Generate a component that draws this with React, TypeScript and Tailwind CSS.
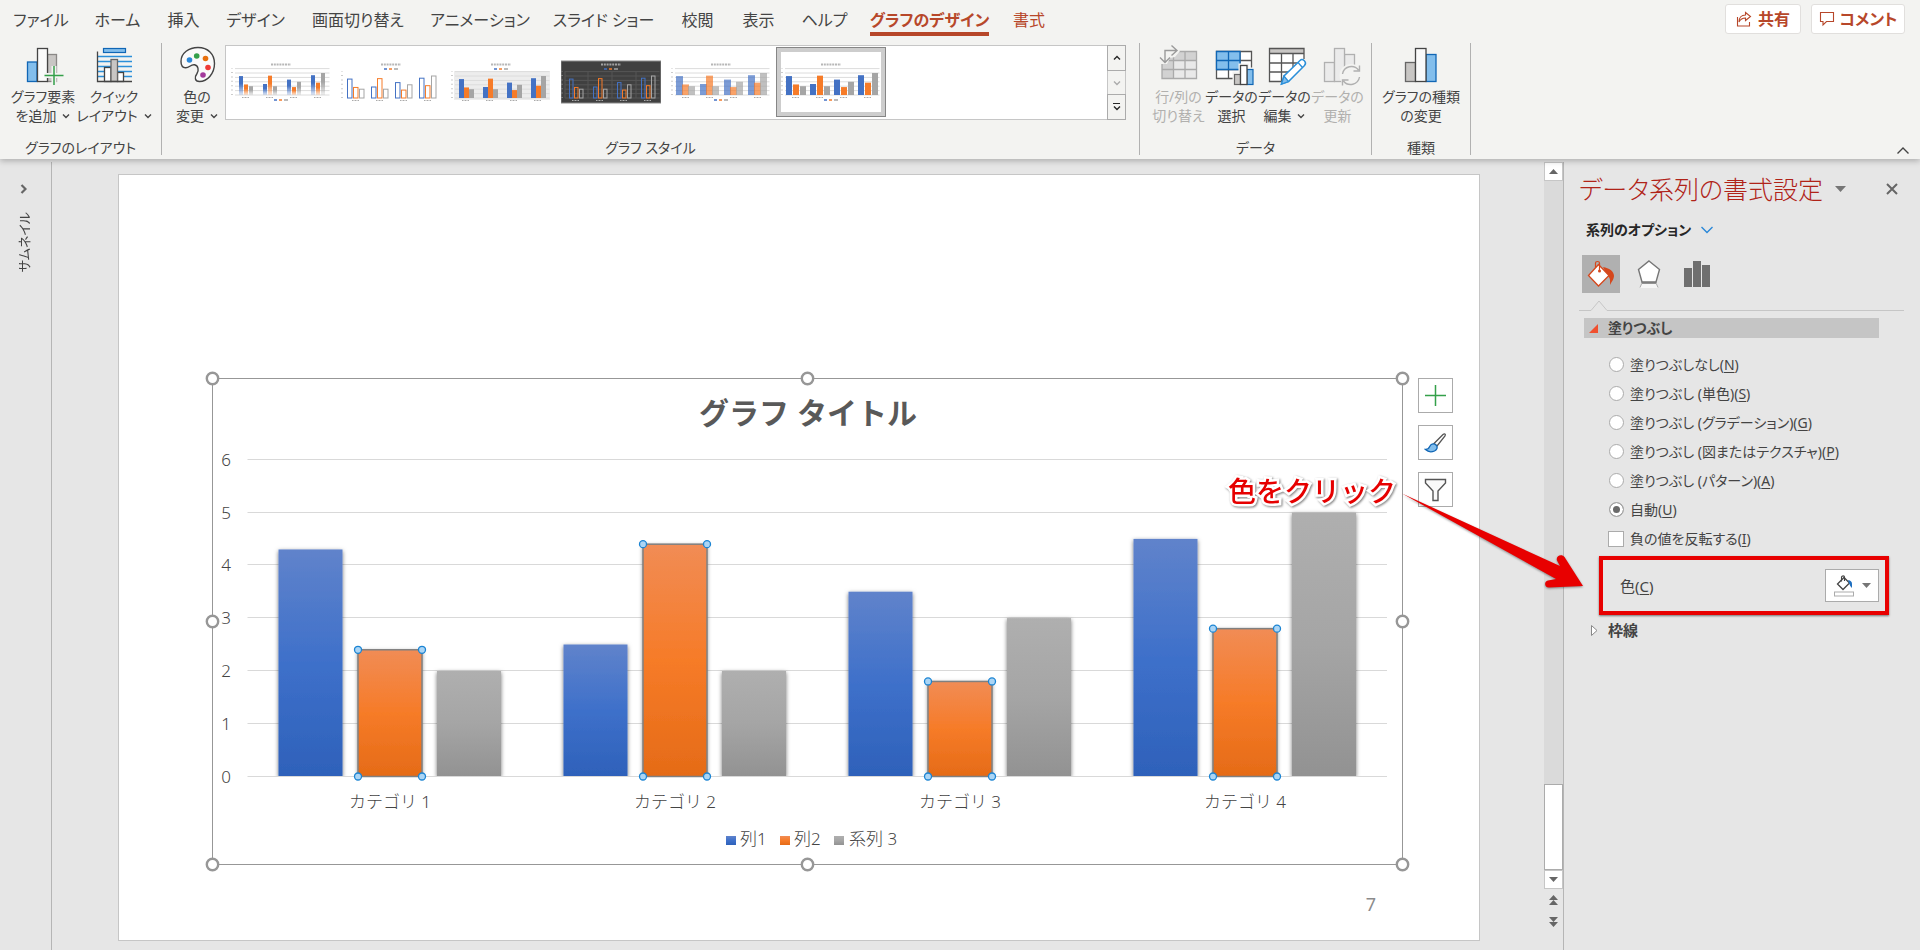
import React from 'react'

const tabs = [
  { label: 'ファイル', cell: 'w-[78px]' },
  { label: 'ホーム', cell: 'w-[75px]' },
  { label: '挿入', cell: 'w-[57px]' },
  { label: 'デザイン', cell: 'w-[87px]' },
  { label: '画面切り替え', cell: 'w-[118px]' },
  { label: 'アニメーション', cell: 'w-[126px]' },
  { label: 'スライド ショー', cell: 'w-[121px]' },
  { label: '校閲', cell: 'w-[67px]' },
  { label: '表示', cell: 'w-[55px]' },
  { label: 'ヘルプ', cell: 'w-[77px]' },
  { label: 'グラフのデザイン', cell: 'w-[133px]', active: true },
  { label: '書式', cell: 'w-[66px]', context: true },
]

const categories = [
  { name: 'カテゴリ 1', values: [4.3, 2.4, 2] },
  { name: 'カテゴリ 2', values: [2.5, 4.4, 2] },
  { name: 'カテゴリ 3', values: [3.5, 1.8, 3] },
  { name: 'カテゴリ 4', values: [4.5, 2.8, 5] },
]

const fillOptions = [
  { label: '塗りつぶしなし', keyName: 'N' },
  { label: '塗りつぶし (単色)', keyName: 'S' },
  { label: '塗りつぶし (グラデーション)', keyName: 'G' },
  { label: '塗りつぶし (図またはテクスチャ)', keyName: 'P' },
  { label: '塗りつぶし (パターン)', keyName: 'A' },
  { label: '自動', keyName: 'U' },
]

/* ---------- Ribbon icons ---------- */

function RibbonIcon({ children }: { children: React.ReactNode }) {
  return (
    <svg viewBox="0 0 40 40" className="w-10 h-10 overflow-visible" fill="none" aria-hidden="true">
      {children}
    </svg>
  )
}

function AddElementIcon() {
  return (
    <RibbonIcon>
      <rect x="24.5" y="9.5" width="9" height="27" fill="#c8c6c4" stroke="#8a8886" strokeWidth="1.3" />
      <rect x="4.5" y="17" width="9.5" height="19.5" fill="#83beec" stroke="#1066b5" strokeWidth="1.3" />
      <rect x="14.5" y="3.5" width="10" height="33" fill="#fafafa" stroke="#444" strokeWidth="1.3" />
      <path d="M31 21v19M21.5 30.5h19" stroke="#f3f3f1" strokeWidth="5" />
      <path d="M31 21v19M21.5 30.5h19" stroke="#34a04a" strokeWidth="1.5" />
    </RibbonIcon>
  )
}

function QuickLayoutIcon() {
  return (
    <RibbonIcon>
      <rect x="9.5" y="3.5" width="22" height="4" fill="#83beec" stroke="#1066b5" strokeWidth="1.2" />
      <path d="M4 11.5h34M4 16.5h34M4 21.5h34M4 26.5h34M4 31.5h34" stroke="#2b8fd9" strokeWidth="1.5" />
      <rect x="10.5" y="22.5" width="6.5" height="14" fill="#fff" stroke="#444" strokeWidth="1.3" />
      <rect x="23.5" y="27.5" width="6" height="9" fill="#fff" stroke="#444" strokeWidth="1.3" />
      <rect x="17" y="14.5" width="6.5" height="22" fill="#c8c6c4" stroke="#666" strokeWidth="1.3" />
      <path d="M3.5 6.5v30h34.5" stroke="#444" strokeWidth="1.3" />
    </RibbonIcon>
  )
}

function PaletteIcon() {
  return (
    <RibbonIcon>
      <path
        d="M4 16.5C4 8 12 2.5 21 2.5C31 2.5 37.5 9 37.5 18.5C37.5 29 30 36.5 22.5 36.5C17.5 36.5 17.5 32 20 28.5C22 25.5 21.5 20.5 17.5 19.8C13.5 19.2 12.5 23 8.5 22.8C5 22.6 4 19.5 4 16.5Z"
        fill="#fafafa"
        stroke="#444"
        strokeWidth="1.4"
      />
      <circle cx="12.5" cy="15" r="2.8" fill="#2b88d8" />
      <circle cx="19.7" cy="11" r="2.8" fill="#34a04a" />
      <circle cx="28.5" cy="13.5" r="2.8" fill="#e8700f" />
      <circle cx="31" cy="22.5" r="2.8" fill="#ee3a36" />
      <circle cx="26" cy="30" r="2.8" fill="#a33a9c" />
    </RibbonIcon>
  )
}

function SwitchRowColumnIcon() {
  return (
    <RibbonIcon>
      <rect x="3" y="6.5" width="34.5" height="27" fill="#e9e9e9" />
      <path d="M3 6.5h34.5v9H14.5v18H3z" fill="#d2d2d2" />
      <path d="M3 6.5h34.5v27H3zM14.5 6.5v27M26 6.5v27M3 15.5h34.5M3 24.5h34.5" stroke="#aaa" strokeWidth="1.3" />
      <path d="M0 1h16l5 5-5 6-5 1-3 6H0z" fill="#f3f3f1" />
      <path d="M6 17.5V5.5H17.5M1 12.5l5 5 5-5M12.5 0.5l5.5 5-5.5 5" stroke="#9a9a9a" strokeWidth="1.4" />
    </RibbonIcon>
  )
}

function SelectDataIcon() {
  return (
    <RibbonIcon>
      <rect x="4.5" y="6.5" width="35" height="27" fill="#fff" />
      <path d="M4.5 6.5h35v27h-35zM16.5 6.5v27M28 6.5v27M4.5 15.5h35M4.5 24.5h35" stroke="#555" strokeWidth="1.3" />
      <path d="M4.5 6.5H28v18H4.5z" fill="#83beec" stroke="#1066b5" strokeWidth="1.3" />
      <path d="M16.5 6.5v18M4.5 15.5H28" stroke="#1066b5" strokeWidth="1.3" />
      <path d="M20.5 41V26.5h6V18.5h10.5v4h6V41z" fill="#f3f3f1" />
      <rect x="22.5" y="29.5" width="6" height="10" fill="#c8c6c4" stroke="#666" strokeWidth="1.2" />
      <rect x="35" y="24.5" width="6" height="15" fill="#83beec" stroke="#1066b5" strokeWidth="1.2" />
      <rect x="28.5" y="20.5" width="6.5" height="19" fill="#fff" stroke="#444" strokeWidth="1.3" />
    </RibbonIcon>
  )
}

function EditDataIcon() {
  return (
    <RibbonIcon>
      <rect x="4.5" y="3.5" width="34.5" height="33" fill="#fff" />
      <rect x="4.5" y="3.5" width="34.5" height="5" fill="#c8c6c4" />
      <path d="M4.5 3.5H39v33H4.5zM4.5 8.5H39M16.5 8.5v28M28 8.5v28M4.5 18H39M4.5 27H39" stroke="#555" strokeWidth="1.3" />
      <path d="M17 39l2-8L36 14l6 0v24H17z" fill="#f3f3f1" />
      <path d="M16.5 39l2.5-8L35 15.5c2.5-2.5 7.5 1.5 4.5 5L23.5 36.5z" fill="#fff" stroke="#2b8fd9" strokeWidth="1.5" />
      <path d="M16.5 39l2.5-8 4.5 5.5z" fill="#83beec" stroke="#2b8fd9" strokeWidth="1.3" />
      <path d="M33 17.5l4.5 5" stroke="#2b8fd9" strokeWidth="1.3" />
    </RibbonIcon>
  )
}

function RefreshDataIcon() {
  return (
    <RibbonIcon>
      <g fill="#ebebeb" stroke="#b0b0b0" strokeWidth="1.3">
        <rect x="6.5" y="17.5" width="10" height="19" />
        <rect x="26.5" y="9.5" width="10" height="27" />
        <rect x="16.5" y="3.5" width="10" height="33" />
      </g>
      <circle cx="33" cy="30.5" r="11.5" fill="#f3f3f1" />
      <path d="M24.5 29a9 9 0 0 1 16-4M41.5 32a9 9 0 0 1-16 4M41.5 20.5v5.5h-6M24.5 40.5V35h6" stroke="#b0b0b0" strokeWidth="1.4" />
    </RibbonIcon>
  )
}

function ChangeTypeIcon() {
  return (
    <RibbonIcon>
      <rect x="4.5" y="17.5" width="10" height="19" fill="#c8c6c4" stroke="#666" strokeWidth="1.3" />
      <rect x="25" y="9.5" width="10" height="27" fill="#83beec" stroke="#1066b5" strokeWidth="1.3" />
      <rect x="14.5" y="3.5" width="10.5" height="33" fill="#fafafa" stroke="#444" strokeWidth="1.3" />
    </RibbonIcon>
  )
}

function Chevron({ className = '' }: { className?: string }) {
  return (
    <svg viewBox="0 0 8 8" className={`inline-block w-2 h-2 ${className}`} fill="none" aria-hidden="true">
      <path d="M1 2.5l3 3 3-3" stroke="currentColor" strokeWidth="1.4" />
    </svg>
  )
}

/* ---------- Ribbon ---------- */

type RibbonButtonProps = {
  icon: React.ReactNode
  lines: [string, string]
  width: string
  menu?: boolean
  disabled?: boolean
}

function RibbonButton({ icon, lines, width, menu, disabled }: RibbonButtonProps) {
  return (
    <button
      disabled={disabled}
      className={`${width} shrink-0 flex flex-col items-center gap-[2px] pt-[2px] text-[14px] leading-[19px] whitespace-nowrap ${disabled ? 'text-[#b1b0ae]' : 'text-[#444]'}`}
    >
      {icon}
      <span className="flex flex-col items-center">
        <span>{lines[0]}</span>
        <span className="flex items-center gap-[6px]">
          {lines[1]}
          {menu && <Chevron />}
        </span>
      </span>
    </button>
  )
}

type RibbonGroupProps = {
  label: string
  width: string
  pad: string
  children: React.ReactNode
}

function RibbonGroup({ label, width, pad, children }: RibbonGroupProps) {
  return (
    <section className={`${width} flex flex-col justify-between border-r border-[#b1b1b1] h-[112px]`}>
      <div className={`flex ${pad}`}>{children}</div>
      <div className="text-center text-[14px] leading-[14px] text-[#444]">{label}</div>
    </section>
  )
}

type ThumbKind = 'faded' | 'outline' | 'band' | 'dark' | 'soft' | 'solid'

const thumbShapes: Record<ThumbKind, { first: number; step: number; bar: number; base: number }> = {
  faded: { first: 8, step: 5, bar: 4, base: 43 },
  outline: { first: 6, step: 6, bar: 5, base: 46 },
  band: { first: 8, step: 5, bar: 5, base: 46 },
  dark: { first: 8, step: 5, bar: 4, base: 46 },
  soft: { first: 5, step: 6, bar: 7, base: 43 },
  solid: { first: 5, step: 7, bar: 6, base: 43 },
}

function StyleThumb({ kind }: { kind: ThumbKind }) {
  const { first, step, bar, base } = thumbShapes[kind]
  const colors = ['#4472c4', '#f67b28', '#a5a5a5']
  const hollow = kind === 'outline' || kind === 'dark'
  const grid = kind === 'dark' ? '#555' : '#dcdcdc'
  const legendY = base === 46 ? 17 : 48
  return (
    <svg viewBox="0 0 100 60" className="w-[100px] h-[60px] bg-white" aria-hidden="true">
      <defs>
        {colors.map((c, s) => (
          <linearGradient key={c} id={`fade-${s}`} x1="0" y1="0" x2="0" y2="1">
            <stop offset="0.4" stopColor={c} />
            <stop offset="1" stopColor={c} stopOpacity="0.15" />
          </linearGradient>
        ))}
      </defs>
      {kind === 'dark' && <rect x="0" y="9" width="100" height="42" fill="#404040" stroke="#8a8a8a" />}
      {kind === 'band' && <rect x="3" y="19" width="96" height="29" fill="#ededed" />}
      {kind !== 'outline' &&
        [0, 1, 2, 3, 4, 5, 6].map((n) => (
          <path key={n} d={`M4 ${base - n * 4.4}H98.5`} stroke={grid} strokeWidth="1" />
        ))}
      {kind === 'dark' && <path d="M4 19v27M27 19v27M51 19v27M75 19v27" stroke={grid} />}
      <path d={`M1 ${base}v-27`} stroke={kind === 'dark' ? '#999' : '#aaa'} strokeDasharray="1 3.4" strokeWidth="1.2" />
      <path d="M40 12.5h20" stroke={kind === 'dark' ? '#ccc' : '#999'} strokeWidth="2" strokeDasharray="2 0.8" opacity="0.7" />
      {categories.map((cat, c) => (
        <g key={cat.name}>
          {cat.values.map((v, s) => {
            const x = first + c * 24 + s * step
            return (
              <rect
                key={s}
                x={hollow ? x + 0.5 : x}
                y={base - v * 4.4}
                width={hollow ? bar - 0.5 : bar}
                height={v * 4.4}
                fill={hollow ? 'none' : kind === 'faded' ? `url(#fade-${s})` : colors[s]}
                stroke={hollow ? colors[s] : 'none'}
                opacity={kind === 'soft' ? 0.7 : 1}
              />
            )
          })}
          <path d={`M${11 + c * 24} ${base + 2.5}h7`} stroke="#aaa" strokeWidth="1" strokeDasharray="1 0.5" />
        </g>
      ))}
      <path d={`M43 ${legendY}h3`} stroke="#4472c4" strokeWidth="1.5" />
      <path d={`M48 ${legendY}h3`} stroke="#f67b28" strokeWidth="1.5" />
      <path d={`M53 ${legendY}h4`} stroke="#a5a5a5" strokeWidth="1.5" />
    </svg>
  )
}

function StyleGallery() {
  const kinds: ThumbKind[] = ['faded', 'outline', 'band', 'dark', 'soft', 'solid']
  return (
    <div className="flex flex-1 mt-[2px] h-[75px]">
      <div className="flex-1 flex bg-white border border-[#c6c6c6] border-r-0 pt-[1px]">
        {kinds.map((kind, i) => (
          <button
            key={kind}
            aria-label={`スタイル ${i + 1}`}
            className={`w-[110px] h-[70px] shrink-0 border p-1 ${kind === 'solid' ? 'border-[#868686] bg-[#cdcdcd]' : 'border-transparent'}`}
          >
            <StyleThumb kind={kind} />
          </button>
        ))}
      </div>
      <div className="w-[19px] flex flex-col text-[#262626]">
        <button aria-label="前の行" className="flex-1 flex items-center justify-center border border-[#ababab]">
          <Chevron className="rotate-180" />
        </button>
        <button aria-label="次の行" disabled className="flex-1 flex items-center justify-center border-x border-[#c6c6c6] text-[#ababab]">
          <Chevron />
        </button>
        <button aria-label="その他" className="flex-1 flex flex-col items-center justify-center border border-[#ababab]">
          <span className="w-[7px] h-px bg-[#262626]" />
          <Chevron />
        </button>
      </div>
    </div>
  )
}

function Ribbon() {
  return (
    <header className="relative z-10 bg-[#f3f3f1] shadow-[0_2px_6px_rgba(0,0,0,0.25)]">
      <div className="flex justify-between h-[43px] pl-[2px] pr-[15px]">
        <nav className="flex h-9">
          {tabs.map((tab) => (
            <button
              key={tab.label}
              className={`${tab.cell} shrink-0 flex justify-center text-[16px] whitespace-nowrap ${tab.active ? 'font-bold text-[#b7472a]' : tab.context ? 'text-[#b7472a]' : 'text-[#444]'}`}
            >
              <span className={`h-9 pt-2 leading-6 ${tab.active ? 'border-b-4 border-[#b7472a]' : ''}`}>{tab.label}</span>
            </button>
          ))}
        </nav>
        <div className="flex gap-[10px] pt-1">
          <button className="w-[76px] h-[30px] flex items-center justify-center gap-[6px] rounded-[3px] bg-white border border-[#e1dfdd] text-[16px] leading-6 font-bold text-[#b7472a]">
            <svg viewBox="0 0 16 16" className="w-4 h-4" fill="none" stroke="currentColor" strokeWidth="1.1" aria-hidden="true">
              <path d="M1.5 6v9h12v-4M9.5 1.5l5 4-5 4v-2.5c-3 0-5 1-6.5 4 0-4.5 2.5-7 6.5-7z" />
            </svg>
            共有
          </button>
          <button className="w-[94px] h-[30px] flex items-center justify-center gap-[5px] rounded-[3px] bg-white border border-[#e1dfdd] text-[16px] leading-6 font-bold text-[#b7472a]">
            <svg viewBox="0 0 16 16" className="w-4 h-4" fill="none" stroke="currentColor" strokeWidth="1.1" aria-hidden="true">
              <path d="M1.5 1.5h13v9h-7l-3.5 3.5v-3.5h-2.5z" />
            </svg>
            コメント
          </button>
        </div>
      </div>
      <div className="flex h-[116px]">
        <RibbonGroup label="グラフのレイアウト" width="w-[162px]" pad="pl-2">
          <RibbonButton icon={<AddElementIcon />} lines={['グラフ要素', 'を追加']} width="w-[70px]" menu />
          <RibbonButton icon={<QuickLayoutIcon />} lines={['クイック', 'レイアウト']} width="w-[72px]" menu />
        </RibbonGroup>
        <RibbonGroup label="グラフ スタイル" width="flex-1 max-w-[978px]" pad="pl-[7px] pr-[13px]">
          <RibbonButton icon={<PaletteIcon />} lines={['色の', '変更']} width="w-[56px]" menu />
          <StyleGallery />
        </RibbonGroup>
        <RibbonGroup label="データ" width="w-[232px]" pad="pl-3">
          <RibbonButton icon={<SwitchRowColumnIcon />} lines={['行/列の', '切り替え']} width="w-[53px]" disabled />
          <RibbonButton icon={<SelectDataIcon />} lines={['データの', '選択']} width="w-[53px]" />
          <RibbonButton icon={<EditDataIcon />} lines={['データの', '編集']} width="w-[53px]" menu />
          <RibbonButton icon={<RefreshDataIcon />} lines={['データの', '更新']} width="w-[53px]" disabled />
        </RibbonGroup>
        <RibbonGroup label="種類" width="w-[99px]" pad="px-[9px]">
          <RibbonButton icon={<ChangeTypeIcon />} lines={['グラフの種類', 'の変更']} width="w-20" />
        </RibbonGroup>
        <button aria-label="リボンを折りたたむ" className="ml-auto mr-[10px] self-end h-4 w-[14px] text-[#444]">
          <svg viewBox="0 0 14 16" className="w-[14px] h-4" fill="none" aria-hidden="true">
            <path d="M1.5 10.5l5.5-5.5 5.5 5.5" stroke="currentColor" strokeWidth="1.4" />
          </svg>
        </button>
      </div>
    </header>
  )
}

/* ---------- Slide ---------- */

const BASE_Y = 405.5
const UNIT = 52.8
const series = [
  { id: 'blue', name: '列1', offset: 31, stops: ['#6083cb', '#3e70ca', '#2e61ba'], legendX: 521, textX: 535 },
  { id: 'orange', name: '列2', offset: 110.5, stops: ['#f18c55', '#f67b28', '#e56b17'], legendX: 575, textX: 589 },
  { id: 'gray', name: '系列 3', offset: 189.5, stops: ['#afafaf', '#a5a5a5', '#929292'], legendX: 629, textX: 644 },
]

function Chart() {
  const handles = [7.5, 602.5, 1197.5].flatMap((x) => [7.5, 250.5, 493.5].map((y) => [x, y])).filter(([x, y]) => x !== 602.5 || y !== 250.5)
  return (
    <svg viewBox="0 0 1205 501" className="block flex-1 min-w-0 h-auto self-start" role="img" aria-label="グラフ タイトル">
      <defs>
        {series.map((s) => (
          <linearGradient key={s.id} id={`bar-${s.id}`} x1="0" y1="0" x2="0" y2="1">
            <stop offset="0" stopColor={s.stops[0]} />
            <stop offset="0.5" stopColor={s.stops[1]} />
            <stop offset="1" stopColor={s.stops[2]} />
          </linearGradient>
        ))}
        <filter id="bar-shadow" x="-10%" y="-10%" width="120%" height="120%">
          <feDropShadow dx="0" dy="1.5" stdDeviation="2" floodColor="#000" floodOpacity="0.55" />
        </filter>
        <clipPath id="plot">
          <rect x="42" y="0" width="1142" height="405" />
        </clipPath>
      </defs>

      <rect x="7.5" y="7.5" width="1190" height="486" fill="none" stroke="#979797" />
      <text x="603" y="53" textAnchor="middle" fontSize="30" fontWeight="700" fill="#595959" className="[font-feature-settings:normal]">
        グラフ タイトル
      </text>

      {[0, 1, 2, 3, 4, 5, 6].map((n) => {
        const y = Math.round(BASE_Y - n * UNIT) - 0.5
        return (
          <g key={n}>
            <path d={`M42.5 ${y}H1182`} stroke="#d9d9d9" />
            <text x="26" y={y + 6} textAnchor="end" fontSize="17" fontWeight="300" fill="#444">
              {n}
            </text>
          </g>
        )
      })}

      <g clipPath="url(#plot)">
        {categories.map((cat, c) =>
          series.map((s, i) => {
            const h = cat.values[i] * UNIT
            return (
              <rect
                key={s.id}
                x={42.5 + c * 285 + s.offset}
                y={BASE_Y - h}
                width="64"
                height={h}
                fill={`url(#bar-${s.id})`}
                filter="url(#bar-shadow)"
              />
            )
          }),
        )}
      </g>

      {/* Selection marks on the orange series */}
      {categories.map((cat, c) => {
        const x = 153 + c * 285
        const h = cat.values[1] * UNIT
        return (
          <g key={cat.name}>
            <rect x={x} y={BASE_Y - h} width="64" height={h} fill="none" stroke="#808080" strokeWidth="1.5" />
            {[x, x + 64].map((cx) =>
              [BASE_Y, BASE_Y - h].map((cy) => (
                <circle key={`${cx}-${cy}`} cx={cx} cy={cy} r="3.5" fill="#abd5f5" stroke="#1b84d3" strokeWidth="1.3" />
              )),
            )}
            <text x={185 + c * 285} y="437" textAnchor="middle" fontSize="17" fontWeight="300" fill="#444" className="[font-feature-settings:normal]">
              {cat.name}
            </text>
          </g>
        )
      })}

      {series.map((s) => (
        <g key={s.id}>
          <rect x={s.legendX} y="465" width="10" height="9" fill={`url(#bar-${s.id})`} />
          <text x={s.textX} y="474" fontSize="17" fontWeight="300" fill="#444">
            {s.name}
          </text>
        </g>
      ))}

      {handles.map(([x, y]) => (
        <circle key={`${x}-${y}`} cx={x} cy={y} r="5.7" fill="#fff" stroke="#979797" strokeWidth="2.4" />
      ))}
    </svg>
  )
}

function ChartTools() {
  const box = 'w-[35px] h-[35px] flex items-center justify-center bg-white border border-[#ababab]'
  return (
    <div className="flex flex-col gap-3 pt-[7px]">
      <button aria-label="グラフ要素" className={box}>
        <svg viewBox="0 0 24 24" className="w-6 h-6" aria-hidden="true">
          <path d="M11.5 1v21M1 11.5h21" stroke="#34a04a" strokeWidth="1.5" />
        </svg>
      </button>
      <button aria-label="グラフ スタイル" className={box}>
        <svg viewBox="0 0 24 24" className="w-6 h-6" fill="none" aria-hidden="true">
          <path d="M10 12.5L19 3.5c1.5-1.2 3-.5 2 1.5l-8 10z" fill="#fff" stroke="#555" strokeWidth="1.3" />
          <path d="M1.5 18.5c3 .2 3.5-1.5 4.5-3.5 1.2-2.5 4.5-3 6.5-.5 1.5 2.5 0 4.5-2 5.5-3 1.2-6.5 1-9-1.5z" fill="#83beec" stroke="#1066b5" strokeWidth="1.3" />
        </svg>
      </button>
      <button aria-label="グラフ フィルター" className={box}>
        <svg viewBox="0 0 24 24" className="w-6 h-6" fill="none" aria-hidden="true">
          <path d="M1.5 1.5h20v3.5l-7.5 8v9.5h-5v-9.5l-7.5-8z" fill="#fafafa" stroke="#555" strokeWidth="1.4" />
        </svg>
      </button>
    </div>
  )
}

function VerticalScrollbar() {
  const arrow = 'w-[9px] h-[5px] fill-[#666]'
  return (
    <div className="w-[19px] shrink-0 flex flex-col mt-[3px] bg-[#dadada]">
      <button aria-label="上へスクロール" className="h-[19px] flex items-center justify-center bg-white border border-[#c6c6c6]">
        <svg viewBox="0 0 9 5" className={arrow} aria-hidden="true"><path d="M4.5 0L9 5H0z" /></svg>
      </button>
      <div className="flex-1" />
      <div className="h-[86px] bg-white border border-[#ababab]" />
      <button aria-label="下へスクロール" className="h-[19px] flex items-center justify-center bg-white border border-[#c6c6c6]">
        <svg viewBox="0 0 9 5" className={arrow} aria-hidden="true"><path d="M0 0h9L4.5 5z" /></svg>
      </button>
      <div className="h-[61px] pt-[6px] flex flex-col items-center gap-3 bg-[#e6e6e6]">
        <button aria-label="前のスライド">
          <svg viewBox="0 0 9 10" className="block w-[9px] h-[10px] fill-[#666]" aria-hidden="true"><path d="M4.5 0L9 5H0zM4.5 5L9 10H0z" /></svg>
        </button>
        <button aria-label="次のスライド">
          <svg viewBox="0 0 9 10" className="block w-[9px] h-[10px] fill-[#666]" aria-hidden="true"><path d="M0 0h9L4.5 5zM0 5h9L4.5 10z" /></svg>
        </button>
      </div>
    </div>
  )
}

/* ---------- Format pane ---------- */

function PaneTabs() {
  return (
    <>
      <div className="flex items-center gap-[17px] mt-[15px] ml-[18px]">
        <button aria-label="塗りつぶしと線" className="w-[38px] h-[38px] flex items-center justify-center bg-[#b0b0b0]">
          <svg viewBox="0 0 28 28" className="w-7 h-7" fill="none" aria-hidden="true">
            <path d="M16 7c6 1 11 4 11 9 0 3-2 5-4 9 0-5 .5-7-2.5-9z" fill="#d5471c" />
            <path d="M11.5 4.5L22 15.5 11.5 26 1.5 15.5z" fill="#fff" stroke="#d5471c" strokeWidth="1.3" />
            <path d="M8.5 7.5V3c0-2 4-2 4 0v8" stroke="#d5471c" strokeWidth="1.2" />
            <circle cx="12.5" cy="11" r="1.5" fill="#d5471c" />
          </svg>
        </button>
        <button aria-label="効果" className="w-[24px] h-[38px] flex items-center justify-center">
          <svg viewBox="0 0 24 28" className="w-6 h-7" fill="none" aria-hidden="true">
            <path d="M4.5 24h15l1.5 4H3z" fill="#f6f6f6" />
            <path d="M12 1l10.5 8.5L19 22H5L1.5 9.5z" fill="#fff" stroke="#767676" strokeWidth="1.4" />
            <path d="M4.5 23h15" stroke="#767676" strokeWidth="1.5" />
            <path d="M4.5 24L3 27.5M19.5 24l1.5 3.5" stroke="#aaa" />
          </svg>
        </button>
        <button aria-label="系列のオプション" className="w-[38px] h-[38px] flex items-center justify-center">
          <svg viewBox="0 0 26 26" className="w-[26px] h-[26px] fill-[#6f6f6f]" aria-hidden="true">
            <path d="M0 7h8v19H0zM9 0h8v26H9zM18 4h8v22h-8z" />
          </svg>
        </button>
      </div>
      <div className="flex items-end mt-[7px] ml-[15px] mr-4 h-[11px]">
        <span className="w-3 h-px bg-[#c6c6c6]" />
        <svg viewBox="0 0 16 11" className="w-4 h-[11px]" fill="none" aria-hidden="true">
          <path d="M0 10.5L8 1l8 9.5" stroke="#c6c6c6" />
        </svg>
        <span className="flex-1 h-px bg-[#c6c6c6]" />
      </div>
    </>
  )
}

function AccessKey({ name }: { name: string }) {
  return (
    <>
      (<span className="underline underline-offset-2">{name}</span>)
    </>
  )
}

function ColorRow() {
  return (
    <div className="relative w-[290px] h-[59px] mt-[3px] ml-[35px] flex items-center justify-between pl-[17px] pr-[6px] border-4 border-[#e80000] shadow-[0_1px_2px_rgba(0,0,0,0.5)]">
      <label htmlFor="series-color" className="text-[15px] leading-5">
        色<AccessKey name="C" />
      </label>
      <button id="series-color" className="w-[54px] h-[33px] flex items-center justify-center gap-2 bg-white border border-[#ababab]">
        <svg viewBox="0 0 20 22" className="w-5 h-[22px]" fill="none" aria-hidden="true">
          <path d="M10 2.5L15.5 8 9 14.5 3.5 9z" fill="#fff" stroke="#444" strokeWidth="1.3" />
          <path d="M7.5 6.5V2c.5-1.5 3-1.5 3 0v4" stroke="#444" strokeWidth="1.1" />
          <path d="M14 5c3 .5 4 2 4 4v4c-2-1.5-2-3-3-5z" fill="#1f6fc0" />
          <rect x="0.5" y="17" width="19" height="4" fill="#fff" stroke="#ababab" />
        </svg>
        <svg viewBox="0 0 9 5" className="w-[9px] h-[5px] fill-[#767676]" aria-hidden="true"><path d="M0 0h9L4.5 5z" /></svg>
      </button>

      {/* Instruction callout that points at the colour row */}
      <strong className="absolute right-full -top-[87px] mr-[207px] text-[28px] leading-9 font-medium whitespace-nowrap text-[#e60000] [font-feature-settings:normal] [-webkit-text-stroke:5px_white] [paint-order:stroke_fill] drop-shadow-[1px_1px_1px_rgba(0,0,0,0.5)]">
        色をクリック
      </strong>
      <svg
        viewBox="0 0 195 110"
        className="absolute right-full -top-[75px] mr-[14px] w-[195px] h-[110px] max-w-none drop-shadow-[0_1px_1px_rgba(0,0,0,0.4)]"
        aria-hidden="true"
      >
        <path
          d="M8 8.5L166 81L163 75.5C161.500 71 167.500 68 170.500 72L189 101L155 102.500C150 102.500 150 96 154 95.500L162 94Z"
          fill="#e80000"
        />
      </svg>
    </div>
  )
}

function FormatPane() {
  return (
    <aside className="relative w-[357px] shrink-0 mt-[3px] border-l border-[#b5b5b5] text-[#444]">
      <div className="flex items-center h-9 mt-[9px] pl-[15px] pr-[22px]">
        <h2 className="text-[25px] leading-9 font-light whitespace-nowrap text-[#b02318]">データ系列の書式設定</h2>
        <button aria-label="作業ウィンドウのオプション" className="ml-3">
          <svg viewBox="0 0 11 6" className="block w-[11px] h-[6px] fill-[#767676]" aria-hidden="true"><path d="M0 0h11L5.5 6z" /></svg>
        </button>
        <button aria-label="閉じる" className="ml-auto">
          <svg viewBox="0 0 12 12" className="block w-3 h-3" aria-hidden="true"><path d="M1 1l10 10M11 1L1 11" stroke="#666" strokeWidth="2" /></svg>
        </button>
      </div>
      <button className="flex items-center gap-[10px] mt-[13px] ml-[22px] text-[14px] leading-5 font-bold text-[#262626]">
        系列のオプション
        <svg viewBox="0 0 12 8" className="w-3 h-2" fill="none" aria-hidden="true">
          <path d="M0.5 1l5.5 5.5L11.5 1" stroke="#2b88d8" strokeWidth="1.4" />
        </svg>
      </button>
      <PaneTabs />

      <button className="flex items-center w-[295px] h-5 mt-[7px] ml-5 pl-[5px] gap-[10px] bg-[#c5c5c5] text-[14px] leading-5 font-bold">
        <svg viewBox="0 0 9 9" className="w-[9px] h-[9px] fill-[#f0502f]" aria-hidden="true"><path d="M9 0v9H0z" /></svg>
        塗りつぶし
      </button>
      <div className="flex flex-col mt-3 ml-[45px] text-[14px]">
        {fillOptions.map((option) => (
          <label key={option.keyName} className="flex items-center gap-[6px] h-[29px] leading-5">
            <input
              type="radio"
              name="fill"
              defaultChecked={option.keyName === 'U'}
              className="appearance-none w-[15px] h-[15px] rounded-full bg-white border border-[#ababab] checked:bg-[#6a6a6a] checked:shadow-[inset_0_0_0_3px_#fff]"
            />
            <span>
              {option.label}
              <AccessKey name={option.keyName} />
            </span>
          </label>
        ))}
        <label className="flex items-center gap-[6px] h-[29px] leading-5">
          <input type="checkbox" className="appearance-none w-4 h-4 -ml-px bg-white border border-[#ababab]" />
          <span>
            負の値を反転する
            <AccessKey name="I" />
          </span>
        </label>
      </div>
      <ColorRow />
      <button className="flex items-center gap-[10px] mt-[5px] ml-[27px] text-[15px] leading-5 font-bold">
        <svg viewBox="0 0 7 11" className="w-[7px] h-[11px]" aria-hidden="true"><path d="M0.5 0.5v10l5.5-5z" fill="#fff" stroke="#888" /></svg>
        枠線
      </button>
    </aside>
  )
}

export default function App() {
  return (
    <div className="min-h-screen flex flex-col bg-[#e6e6e6] font-['Noto_Sans','Noto_Sans_CJK_JP',sans-serif] [font-feature-settings:'palt']">
      <Ribbon />
      <div className="flex-1 flex">
        <div className="w-[52px] shrink-0 flex flex-col items-center mt-[3px] pt-[22px] pr-1 border-r border-[#b5b5b5]">
          <button aria-label="サムネイルを展開">
            <svg viewBox="0 0 7 10" className="block w-[7px] h-[10px]" fill="none" aria-hidden="true"><path d="M1.5 1l4 4-4 4" stroke="#666" strokeWidth="2.2" /></svg>
          </button>
          <span className="mt-[18px] text-[13px] leading-5 text-[#444] [writing-mode:vertical-rl] [text-orientation:sideways] rotate-180">サムネイル</span>
        </div>
        <main className="flex-1 min-w-0 flex flex-col pt-[15px] pb-[9px] pl-[66px] pr-16">
          <div className="flex-1 flex flex-col bg-white border border-[#c6c6c6]">
            <div className="flex gap-2 pt-[196px] pl-[86px] pr-[26px]">
              <Chart />
              <ChartTools />
            </div>
            <div className="mt-[22px] pr-[103px] text-right text-[18px] leading-5 text-[#8b8b8b]">7</div>
          </div>
        </main>
        <VerticalScrollbar />
        <FormatPane />
      </div>
    </div>
  )
}
